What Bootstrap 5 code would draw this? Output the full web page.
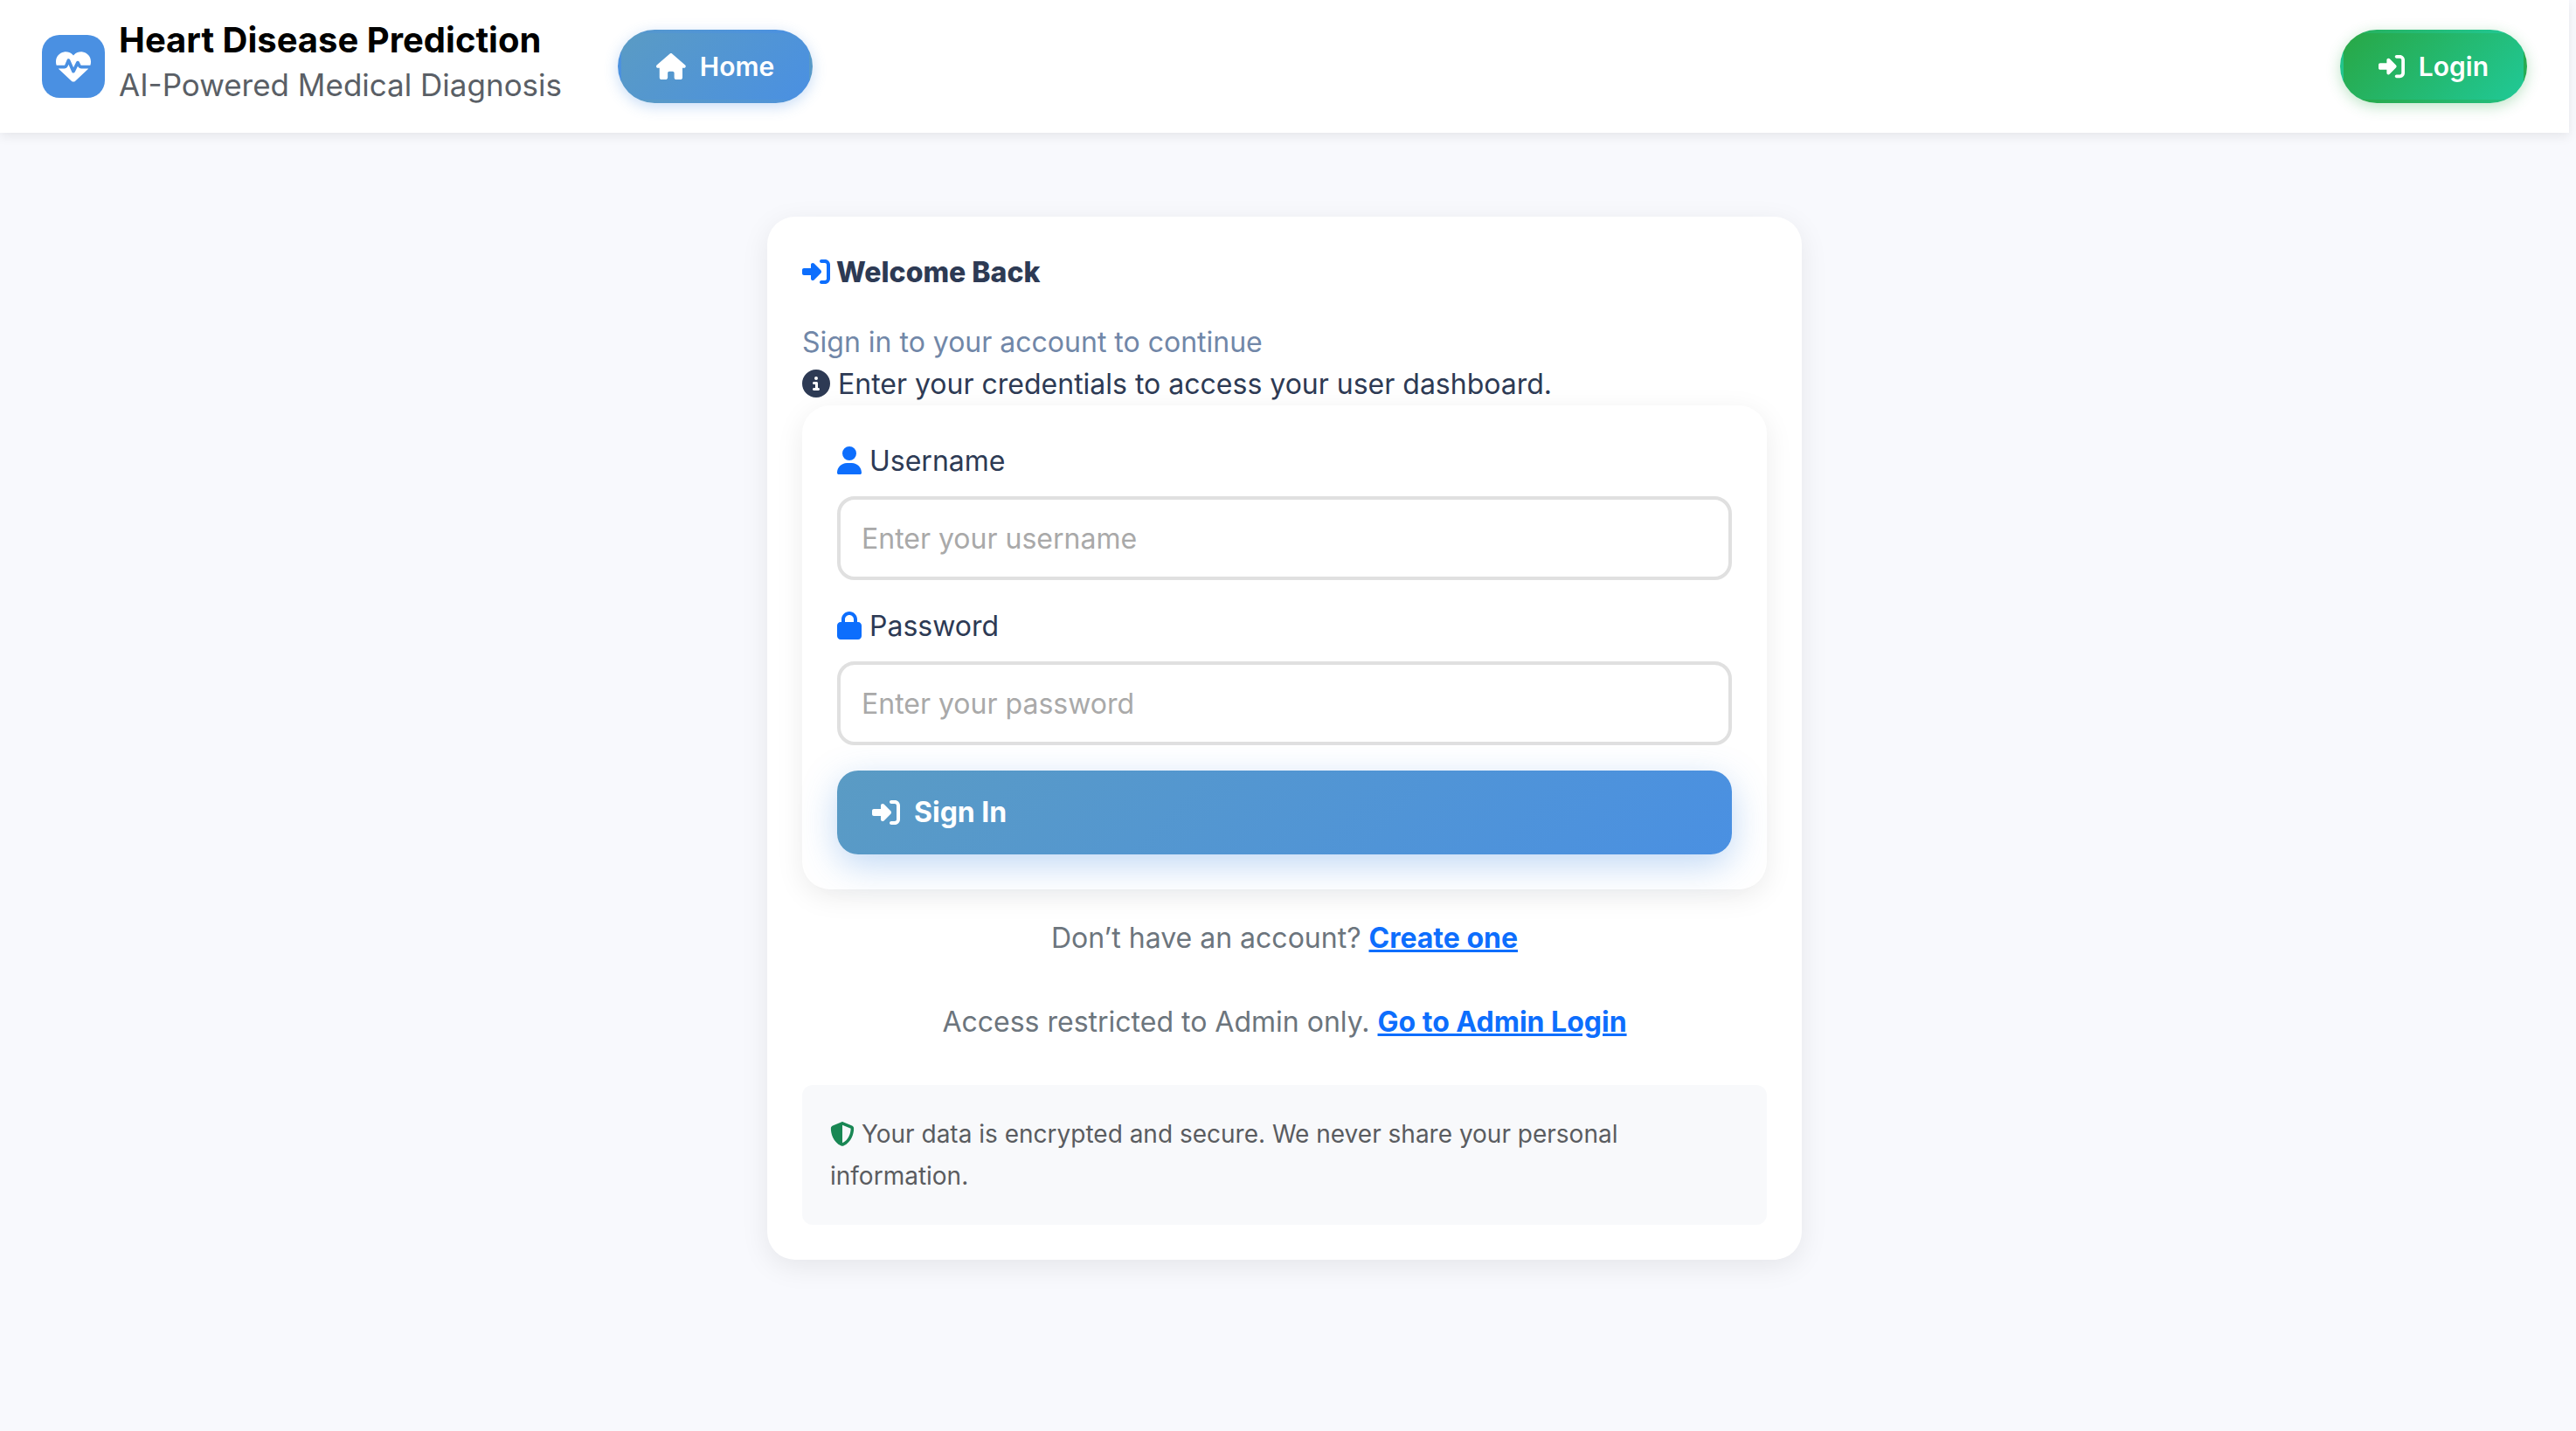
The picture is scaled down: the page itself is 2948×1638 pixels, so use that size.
<!DOCTYPE html>
<html lang="en">
<head>
<meta charset="utf-8">
<meta name="viewport" content="width=device-width, initial-scale=1">
<title>Heart Disease Prediction</title>
<link href="https://cdn.jsdelivr.net/npm/bootstrap@5.3.0/dist/css/bootstrap.min.css" rel="stylesheet">
<style>
  body { background: #f8f9fd; color: #2d3a54; font-family: Inter, sans-serif; font-size: 32px; line-height: 48px; padding-right: 8px; min-height: 100vh; }
  .fa { height: 1em; vertical-align: -0.125em; fill: currentColor; }
  .site-bar { background: #fff; padding: 22px 48px; box-shadow: 0 4px 12px rgba(0,0,0,.08); }
  .brand-tile { width: 72px; height: 72px; border-radius: 20px; background: #4a90e2; color: #fff; font-size: 40px; line-height: 1; }
  .brand-text { padding-bottom: 6px; }
  .brand-name { font-size: 40px; font-weight: 700; color: #000; }
  .brand-note { font-size: 35px; line-height: 54px; color: #5a5f66; }
  .pill { height: 84px; padding: 0 40px; border: 4px solid transparent; border-radius: 42px; font-size: 30px; font-weight: 600; color: #fff; gap: 16px; }
  .pill:hover { color: #fff; }
  .pill-home { background: linear-gradient(135deg, #5a9bc4, #4a90e2); box-shadow: 0 4px 16px rgba(74,144,226,.3); margin-left: 64px; }
  .pill-login { background: linear-gradient(135deg, #28a745, #20c997); box-shadow: 0 4px 16px rgba(40,167,69,.3); }
  .panel { background: #fff; border-radius: 32px; padding: 40px; box-shadow: 0 8px 32px rgba(0,0,0,.08); }
  .login-panel { max-width: 1184px; margin: 96px auto; }
  .panel-title { font-size: 32px; line-height: 48px; font-weight: 800; margin-bottom: 32px; }
  .panel-lead { color: #7187a8; margin: 0; }
  .field { margin-bottom: 29px; }
  .field label { margin-bottom: 16px; display: block; }
  .field .form-control { height: 96px; padding: 0 24px; border: 4px solid #e0e0e0; border-radius: 20px; font-size: 32px; line-height: 48px; }
  .field .form-control::placeholder { color: #a9a9a9; }
  .btn-signin { height: 96px; padding: 0 40px; border: 0; border-radius: 24px; font-size: 32px; font-weight: 700; color: #fff; gap: 16px; background: linear-gradient(135deg, #5a9bc4, #4a90e2); box-shadow: 0 12px 40px rgba(74,144,226,.35); }
  .alt-links { color: #6c757d; text-align: center; margin-top: 32px; }
  .alt-links p { margin-bottom: 48px; }
  .alt-links a { color: #0d6efd; font-weight: 700; }
  .privacy-box { background: #f8f9fb; border-radius: 12px; padding: 32px; font-size: 28px; color: #5a5c60; }
</style>
</head>
<body>
<header class="site-bar d-flex align-items-center">
  <a href="#" class="d-flex align-items-center text-decoration-none gap-3">
    <span class="brand-tile d-flex align-items-center justify-content-center"><svg class="fa" viewBox="0 0 512 512"><path d="M228.3 469.1L47.6 300.4c-4.2-3.9-8.2-8.1-11.9-12.4h87c22.6 0 43-13.6 51.7-34.5l10.5-25.2 49.3 109.5c3.8 8.5 12.1 14 21.4 14.1s17.8-5 22-13.3L320 253.7l1.7 3.4c9.5 19 28.9 31 50.1 31H476.3c-3.7 4.3-7.7 8.5-11.9 12.4L283.7 469.1c-7.5 7-17.4 10.9-27.7 10.9s-20.2-3.9-27.7-10.9zM503.7 240h-132c-3 0-5.8-1.7-7.2-4.4l-23.2-46.3c-4.1-8.1-12.4-13.3-21.5-13.3s-17.4 5.1-21.5 13.3l-41.4 82.8L205.9 158.2c-3.9-8.7-12.7-14.3-22.2-14.1s-18.1 5.9-21.8 14.8l-31.8 76.3c-1.2 3-4.2 4.9-7.4 4.9H16c-2.6 0-5 .4-7.3 1.1C3 225.2 0 208.2 0 190.9v-5.8c0-69.9 50.5-129.5 119.4-141C165 36.5 211.4 51.4 244 84l12 12 12-12c32.6-32.6 79-47.5 124.6-39.9C461.5 55.6 512 115.2 512 185.1v5.8c0 16.9-2.8 33.5-8.3 49.1z"/></svg></span>
    <span class="brand-text d-flex flex-column">
      <span class="brand-name">Heart Disease Prediction</span>
      <span class="brand-note">AI-Powered Medical Diagnosis</span>
    </span>
  </a>
  <a href="#" class="btn pill pill-home d-flex align-items-center"><svg class="fa" viewBox="0 0 576 512"><path d="M575.8 255.5c0 18-15 32.1-32 32.1h-32l.7 160.2c0 2.7-.2 5.4-.5 8.1V472c0 22.1-17.9 40-40 40H456c-1.1 0-2.2 0-3.3-.1c-1.4 .1-2.8 .1-4.2 .1H416 392c-22.1 0-40-17.9-40-40V448 384c0-17.7-14.3-32-32-32H256c-17.7 0-32 14.3-32 32v64 24c0 22.1-17.9 40-40 40H160 128.1c-1.5 0-3-.1-4.5-.2c-1.2 .1-2.4 .2-3.6 .2H104c-22.1 0-40-17.9-40-40V360c0-.9 0-1.9 .1-2.8V287.6H32c-18 0-32-14-32-32.1c0-9 3-17 10-24L266.4 8c7-7 15-8 22-8s15 2 21 7L564.8 231.5c8 7 12 15 11 24z"/></svg>Home</a>
  <a href="#" class="btn pill pill-login d-flex align-items-center ms-auto"><svg class="fa" viewBox="0 0 512 512"><path d="M217.9 105.9L340.7 228.7c7.2 7.2 11.3 17.1 11.3 27.3s-4.1 20.1-11.3 27.3L217.9 406.1c-6.4 6.4-15 9.9-24 9.9c-18.7 0-33.9-15.2-33.9-33.9l0-62.1L32 320c-17.7 0-32-14.3-32-32l0-64c0-17.7 14.3-32 32-32l128 0 0-62.1c0-18.7 15.2-33.9 33.9-33.9c9 0 17.6 3.6 24 9.9zM352 416l64 0c17.7 0 32-14.3 32-32l0-256c0-17.7-14.3-32-32-32l-64 0c-17.7 0-32-14.3-32-32s14.3-32 32-32l64 0c53 0 96 43 96 96l0 256c0 53-43 96-96 96l-64 0c-17.7 0-32-14.3-32-32s14.3-32 32-32z"/></svg>Login</a>
</header>
<main class="panel login-panel">
  <h1 class="panel-title"><svg class="fa text-primary" viewBox="0 0 512 512"><path d="M217.9 105.9L340.7 228.7c7.2 7.2 11.3 17.1 11.3 27.3s-4.1 20.1-11.3 27.3L217.9 406.1c-6.4 6.4-15 9.9-24 9.9c-18.7 0-33.9-15.2-33.9-33.9l0-62.1L32 320c-17.7 0-32-14.3-32-32l0-64c0-17.7 14.3-32 32-32l128 0 0-62.1c0-18.7 15.2-33.9 33.9-33.9c9 0 17.6 3.6 24 9.9zM352 416l64 0c17.7 0 32-14.3 32-32l0-256c0-17.7-14.3-32-32-32l-64 0c-17.7 0-32-14.3-32-32s14.3-32 32-32l64 0c53 0 96 43 96 96l0 256c0 53-43 96-96 96l-64 0c-17.7 0-32-14.3-32-32s14.3-32 32-32z"/></svg> Welcome Back</h1>
  <p class="panel-lead">Sign in to your account to continue</p>
  <p class="mb-0"><svg class="fa" viewBox="0 0 512 512"><path d="M256 512A256 256 0 1 0 256 0a256 256 0 1 0 0 512zM216 336h24V272H216c-13.3 0-24-10.7-24-24s10.7-24 24-24h48c13.3 0 24 10.7 24 24v88h8c13.3 0 24 10.7 24 24s-10.7 24-24 24H216c-13.3 0-24-10.7-24-24s10.7-24 24-24zm40-208a32 32 0 1 1 0 64 32 32 0 1 1 0-64z"/></svg> Enter your credentials to access your user dashboard.</p>
  <form class="panel">
    <div class="field">
      <label for="username"><svg class="fa text-primary" viewBox="0 0 448 512"><path d="M224 256A128 128 0 1 0 224 0a128 128 0 1 0 0 256zm-45.7 48C79.8 304 0 383.8 0 482.3C0 498.7 13.3 512 29.7 512H418.3c16.4 0 29.7-13.3 29.7-29.7C448 383.8 368.2 304 269.7 304H178.3z"/></svg> Username</label>
      <input type="text" class="form-control" id="username" placeholder="Enter your username">
    </div>
    <div class="field">
      <label for="password"><svg class="fa text-primary" viewBox="0 0 448 512"><path d="M144 144v48H304V144c0-44.2-35.8-80-80-80s-80 35.8-80 80zM80 192V144C80 64.5 144.5 0 224 0s144 64.5 144 144v48h16c35.3 0 64 28.7 64 64V448c0 35.3-28.7 64-64 64H64c-35.3 0-64-28.7-64-64V256c0-35.3 28.7-64 64-64H80z"/></svg> Password</label>
      <input type="password" class="form-control" id="password" placeholder="Enter your password">
    </div>
    <button type="submit" class="btn btn-signin w-100 d-flex align-items-center"><svg class="fa" viewBox="0 0 512 512"><path d="M217.9 105.9L340.7 228.7c7.2 7.2 11.3 17.1 11.3 27.3s-4.1 20.1-11.3 27.3L217.9 406.1c-6.4 6.4-15 9.9-24 9.9c-18.7 0-33.9-15.2-33.9-33.9l0-62.1L32 320c-17.7 0-32-14.3-32-32l0-64c0-17.7 14.3-32 32-32l128 0 0-62.1c0-18.7 15.2-33.9 33.9-33.9c9 0 17.6 3.6 24 9.9zM352 416l64 0c17.7 0 32-14.3 32-32l0-256c0-17.7-14.3-32-32-32l-64 0c-17.7 0-32-14.3-32-32s14.3-32 32-32l64 0c53 0 96 43 96 96l0 256c0 53-43 96-96 96l-64 0c-17.7 0-32-14.3-32-32s14.3-32 32-32z"/></svg>Sign In</button>
  </form>
  <div class="alt-links">
    <p>Don’t have an account? <a href="#">Create one</a></p>
    <p>Access restricted to Admin only. <a href="#">Go to Admin Login</a></p>
  </div>
  <div class="privacy-box"><svg class="fa text-success" viewBox="0 0 512 512"><path d="M256 0c4.6 0 9.2 1 13.4 2.9L457.7 82.8c22 9.3 38.4 31 38.3 57.2c-.5 99.2-41.3 280.7-213.6 363.2c-16.7 8-36.1 8-52.8 0C57.3 420.7 16.5 239.2 16 140c-.1-26.2 16.3-47.9 38.3-57.2L242.7 2.9C246.8 1 251.4 0 256 0zm0 66.8V444.8C394 378 431.1 230.1 432 141.4L256 66.8l0 0z"/></svg> Your data is encrypted and secure. We never share your personal information.</div>
</main>
<script src="https://cdn.jsdelivr.net/npm/bootstrap@5.3.0/dist/js/bootstrap.bundle.min.js"></script>
</body>
</html>
